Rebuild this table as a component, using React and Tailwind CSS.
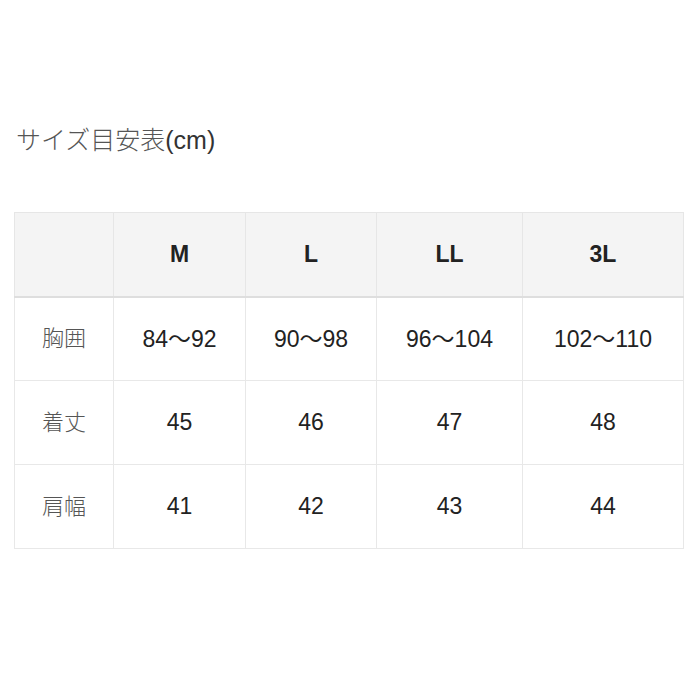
const sizes = ["M", "L", "LL", "3L"];
const rows = [
  { label: "胸囲", values: ["84〜92", "90〜98", "96〜104", "102〜110"] },
  { label: "着丈", values: ["45", "46", "47", "48"] },
  { label: "肩幅", values: ["41", "42", "43", "44"] },
];

export default function App() {
  return (
    <div className="w-[700px] h-[700px] bg-white font-['Liberation_Sans','Noto_Sans_CJK_JP',sans-serif] text-[#222]">
      <div className="pt-[122px] pl-[16px] text-[25px] leading-[36px] text-[#333]">
        <span className="font-light text-[#555]">サイズ目安表</span>(cm)
      </div>
      <table className="ml-[14px] mt-[54px] border-collapse table-fixed w-[669px]">
        <colgroup>
          <col className="w-[99px]" />
          <col className="w-[132px]" />
          <col className="w-[131px]" />
          <col className="w-[146px]" />
          <col className="w-[161px]" />
        </colgroup>
        <thead>
          <tr className="h-[84px] bg-[#f4f4f4]">
            <th className="border border-[#e6e6e6] border-b-2 border-b-[#dedede]" />
            {sizes.map((s) => (
              <th
                key={s}
                className="border border-[#e6e6e6] border-b-2 border-b-[#dedede] text-[23px] font-bold text-center"
              >
                {s}
              </th>
            ))}
          </tr>
        </thead>
        <tbody>
          {rows.map((r) => (
            <tr key={r.label} className="h-[84px]">
              <td className="border border-[#e8e8e8] text-center text-[22px] font-light text-[#555]">
                {r.label}
              </td>
              {r.values.map((v) => (
                <td key={v} className="border border-[#e8e8e8] text-center text-[23px]">
                  {v}
                </td>
              ))}
            </tr>
          ))}
        </tbody>
      </table>
    </div>
  );
}
